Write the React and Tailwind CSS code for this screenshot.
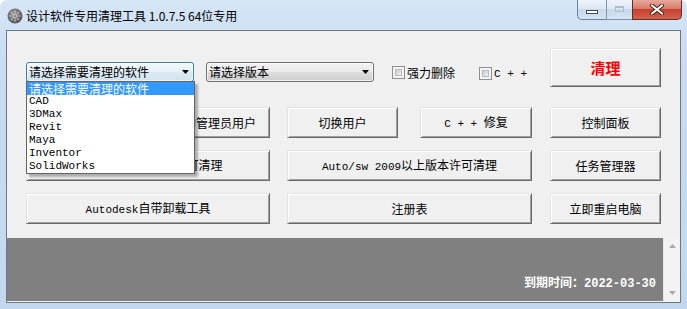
import React from 'react';

const cjk = "font-['Noto_Sans_CJK_SC',sans-serif]";

// ascii runs drawn in a narrow mono face, like the SimSun half-width glyphs
const A = ({ children, className = '' }) => (
  <span className={`font-['Liberation_Mono',monospace] text-[11px] ${className}`}>{children}</span>
);

const Btn = ({ className = '', color = 'text-black', children }) => (
  <button className={`flex items-center justify-center shrink-0 h-[31px] bg-[#f0f0f0] border border-t-[#e3e3e3] border-l-[#e3e3e3] border-r-[#696969] border-b-[#696969] shadow-[inset_1px_1px_0_#fff,inset_-1px_-1px_0_#a0a0a0] leading-none whitespace-nowrap overflow-hidden ${cjk} ${color} ${className}`}>
    <span>{children}</span>
  </button>
);

const Arrow = () => (
  <svg width="7" height="4" viewBox="0 0 7 4"><path d="M0 0h7L3.5 4z" fill="#000" /></svg>
);

const Check = ({ children, className = '' }) => (
  <div className={`flex items-center gap-[2px] ${className}`}>
    <div className="w-[13px] h-[13px] border border-[#8e8f8f] bg-[#f4f4f4] p-[2px]">
      <div className="w-full h-full border border-[#b8bcc2] bg-[linear-gradient(135deg,#c9ced4,#eef0f2)]" />
    </div>
    <span className="text-[12px] leading-none">{children}</span>
  </div>
);

const software = ['CAD', '3DMax', 'Revit', 'Maya', 'Inventor', 'SolidWorks'];

const WinBtn = ({ className, children }) => (
  <div className={`flex items-center justify-center h-[20px] ${className}`}>{children}</div>
);

const App = () => {
  return (
    <div className={`w-[687px] h-[309px] flex flex-col overflow-hidden rounded-t-[7px] bg-[linear-gradient(#d6e6f7,#c9dcf1_60px,#c3d8ef)] ${cjk}`}>
      {/* title bar */}
      <div className="h-[30px] flex items-start shrink-0">
        <div className="flex items-center pl-[7px] pt-[8px]">
          <svg width="16" height="16" viewBox="0 0 16 16">
            <defs>
              <radialGradient id="ic" cx="40%" cy="35%" r="70%">
                <stop offset="0" stopColor="#9a9a9a" />
                <stop offset="1" stopColor="#4e4e4e" />
              </radialGradient>
            </defs>
            <circle cx="8" cy="8" r="7.5" fill="url(#ic)" />
            <circle cx="8" cy="8" r="2" fill="none" stroke="#d8d8d8" strokeWidth="1" />
            <path d="M8 2.5v2M8 11.5v2M2.5 8h2M11.5 8h2M4.2 4.2l1.4 1.4M10.4 10.4l1.4 1.4M4.2 11.8l1.4-1.4M10.4 5.6l1.4-1.4" stroke="#cfcfcf" strokeWidth="1.2" />
          </svg>
          <span className="ml-[3px] text-[12px] leading-none text-black">设计软件专用清理工具 1.0.7.5 64位专用</span>
        </div>
        <div className="ml-auto mr-[5px] flex">
          <WinBtn className="w-[29px] border border-t-0 border-r-0 border-[#6d829c] rounded-bl-[5px] bg-[linear-gradient(#eef4fb,#dde8f4_45%,#c8d9ec_50%,#d4e3f2)]">
            <div className="mt-[4px] w-[12px] h-[4px] bg-white border border-[#3b4a5c]" />
          </WinBtn>
          <WinBtn className="w-[26px] border border-t-0 border-r-0 border-[#8396ae] bg-[linear-gradient(#eef4fb,#dde8f4_45%,#c8d9ec_50%,#d4e3f2)]">
            <div className="w-[9px] h-[6px] border border-[#aebccc] border-t-2 -mt-[1px]" />
          </WinBtn>
          <WinBtn className="w-[50px] border border-t-0 border-[#6b2a22] rounded-br-[5px] bg-[linear-gradient(#e9a99c,#d87b69_45%,#c7402f_50%,#d2624d)]">
            <svg width="14" height="11" viewBox="0 0 14 11">
              <path d="M2 1.5l10 8M12 1.5l-10 8" stroke="#40201c" strokeWidth="4" strokeLinecap="round" />
              <path d="M2 1.5l10 8M12 1.5l-10 8" stroke="#fff" strokeWidth="2.2" strokeLinecap="round" />
            </svg>
          </WinBtn>
        </div>
      </div>

      {/* client area */}
      <div className="mx-[6px] h-[273px] border border-[#6e7884] bg-[#f0f0f0] flex flex-col shrink-0">
        <div className="pl-[19px] pr-[19px] pt-[17px] flex flex-col text-[12px]">
          {/* row 1 */}
          <div className="flex items-start h-[39px]">
            <div className="mt-[14px] relative">
              <div className="flex items-center h-[20px] w-[168px] rounded-[3px] border border-[#3c7fb1] bg-[linear-gradient(#f4f9fc,#e8f1f8_50%,#dbe9f3_50%,#d2e4ef)] pl-[2px] pr-[4px] shadow-[inset_0_0_0_1px_rgba(255,255,255,0.6)]">
                <span className="text-[12px] leading-none flex-1">请选择需要清理的软件</span>
                <Arrow />
              </div>
              <div className="absolute left-0 top-[19px] z-10 w-[169px] border border-[#646464] bg-white shadow-[3px_3px_2px_rgba(0,0,0,0.28)]">
                <div className="h-[13px] flex items-center pl-[2px] bg-[#3399ff] text-white text-[12px] leading-none">请选择需要清理的软件</div>
                {software.map((s) => (
                  <div key={s} className="h-[13px] flex items-center pl-[2px] text-black">
                    <A className="leading-none">{s}</A>
                  </div>
                ))}
              </div>
            </div>
            <div className="mt-[14px] ml-[12px] flex items-center h-[20px] w-[168px] rounded-[3px] border border-[#707070] bg-[linear-gradient(#f2f2f2,#ebebeb_50%,#dddddd_50%,#cfcfcf)] pl-[2px] pr-[4px] shadow-[inset_0_0_0_1px_rgba(255,255,255,0.7)]">
              <span className="text-[12px] leading-none flex-1">请选择版本</span>
              <Arrow />
            </div>
            <Check className="mt-[18px] ml-[18px]">强力删除</Check>
            <Check className="mt-[18px] ml-[24px]"><A>C + +</A></Check>
            <Btn className="ml-auto w-[111px] h-[39px] text-[15px] font-bold" color="text-[#ff0000]">清理</Btn>
          </div>

          {/* row 2 */}
          <div className="flex mt-[20px]">
            <Btn className="w-[244px]">一键开启或关闭系统中内置的管理员用户</Btn>
            <Btn className="w-[111px] ml-[17px]">切换用户</Btn>
            <Btn className="w-[112px] ml-[22px]"><A>C + +&nbsp;</A>修复</Btn>
            <Btn className="w-[111px] ml-[18px]">控制面板</Btn>
          </div>

          {/* row 3 */}
          <div className="flex mt-[12px]">
            <Btn className="w-[244px]"><A>Auto2009</A>以下版本许可清理</Btn>
            <Btn className="w-[245px] ml-[17px]"><A>Auto/sw 2009</A>以上版本许可清理</Btn>
            <Btn className="w-[111px] ml-[18px]">任务管理器</Btn>
          </div>

          {/* row 4 */}
          <div className="flex mt-[12px]">
            <Btn className="w-[244px]"><A>Autodesk</A>自带卸载工具</Btn>
            <Btn className="w-[245px] ml-[17px]">注册表</Btn>
            <Btn className="w-[111px] ml-[18px]">立即重启电脑</Btn>
          </div>
        </div>

        {/* log box */}
        <div className="mt-[14px] h-[63px] flex">
          <div className="flex-1 bg-[#808080] flex items-end justify-end pr-[7px] pb-[11px]">
            <span className="text-white font-bold text-[12px] leading-none">
              到期时间：<A className="font-bold text-[12px]">2022-03-30</A>
            </span>
          </div>
          <div className="w-[17px] bg-[#f3f3f3] border-l border-[#e4e4e4] flex flex-col items-center justify-between py-[6px]">
            <svg width="7" height="4" viewBox="0 0 7 4"><path d="M0 4h7L3.5 0z" fill="#a9a9a9" /></svg>
            <svg width="7" height="4" viewBox="0 0 7 4"><path d="M0 0h7L3.5 4z" fill="#a9a9a9" /></svg>
          </div>
        </div>
      </div>
    </div>
  );
};

export default App;
